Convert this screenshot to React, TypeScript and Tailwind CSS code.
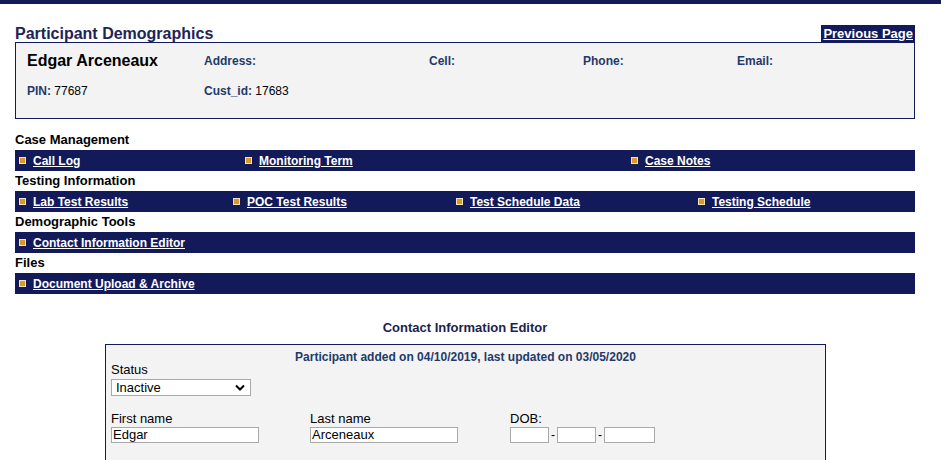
import React from "react";

const NAVY = "bg-[#121a5a]";

type Link = { label: string; width?: string };

function Bullet() {
  return <span className="mr-[7px] inline-block h-[7px] w-[7px] border border-[#f3e3b8] bg-[#d99a2b]" />;
}

function Bar({ links }: { links: Link[] }) {
  return (
    <div className={`flex h-[21px] items-center ${NAVY} pl-[4px]`}>
      {links.map((l) => (
        <div key={l.label} className={`flex items-center ${l.width ?? ""}`}>
          <Bullet />
          <a href="#" className="text-[12px] font-bold text-white underline">
            {l.label}
          </a>
        </div>
      ))}
    </div>
  );
}

function Section({ title, links }: { title: string; links: Link[] }) {
  return (
    <div>
      <div className="flex h-[20px] items-center text-[13px] font-bold text-black">{title}</div>
      <Bar links={links} />
    </div>
  );
}

export default function App() {
  return (
    <div className="min-h-[460px] overflow-hidden bg-white font-['Liberation_Sans',Arial,sans-serif]">
      <div className={`h-[4px] ${NAVY}`} />
      <div className="px-[15px] pr-[26px]">
        <div className="mt-[21px] flex items-end justify-between">
          <h1 className="text-[16px] font-bold leading-[17px] text-[#1d2456]">Participant Demographics</h1>
          <a href="#" className={`${NAVY} px-[2px] text-[13px] font-bold leading-[17px] text-white underline`}>
            Previous Page
          </a>
        </div>
        <div className="h-[77px] border border-[#121a5a] bg-[#f3f3f4] pl-[11px] pt-[6px]">
          <div className="flex items-center">
            <div className="w-[177px] text-[16px] font-bold text-black">Edgar Arceneaux</div>
            <div className="w-[225px] text-[12px] font-bold text-[#1f3a6a]">Address:</div>
            <div className="w-[154px] text-[12px] font-bold text-[#1f3a6a]">Cell:</div>
            <div className="w-[154px] text-[12px] font-bold text-[#1f3a6a]">Phone:</div>
            <div className="text-[12px] font-bold text-[#1f3a6a]">Email:</div>
          </div>
          <div className="mt-[9px] flex items-center text-[12px]">
            <div className="w-[177px]">
              <span className="font-bold text-[#1f3a6a]">PIN:</span> <span className="text-black">77687</span>
            </div>
            <div>
              <span className="font-bold text-[#1f3a6a]">Cust_id:</span> <span className="text-black">17683</span>
            </div>
          </div>
        </div>

        <div className="mt-[11px]">
          <Section
            title="Case Management"
            links={[
              { label: "Call Log", width: "w-[226px]" },
              { label: "Monitoring Term", width: "w-[386px]" },
              { label: "Case Notes" },
            ]}
          />
          <Section
            title="Testing Information"
            links={[
              { label: "Lab Test Results", width: "w-[214px]" },
              { label: "POC Test Results", width: "w-[223px]" },
              { label: "Test Schedule Data", width: "w-[242px]" },
              { label: "Testing Schedule" },
            ]}
          />
          <Section title="Demographic Tools" links={[{ label: "Contact Information Editor" }]} />
          <Section title="Files" links={[{ label: "Document Upload & Archive" }]} />
        </div>

        <div className="mt-[24px] text-center text-[13px] font-bold text-[#1a1f4f]">Contact Information Editor</div>
        <div className="ml-[90px] mt-[6px] h-[140px] w-[721px] border border-[#121a5a] bg-[#f3f3f4] px-[5px] pt-[6px]">
          <div className="text-center text-[12px] font-bold leading-[12px] text-[#1f3a6a]">
            Participant added on 04/10/2019, last updated on 03/05/2020
          </div>
          <div className="text-[13px] leading-[14px] text-black">Status</div>
          <div className="relative mt-[2px] h-[17px] w-[140px] border border-[#a9a9a9] bg-white">
            <span className="absolute left-[4px] top-[0px] text-[13px] leading-[15px] text-black">Inactive</span>
            <svg className="absolute right-[5px] top-[4px]" width="10" height="7" viewBox="0 0 10 7">
              <path d="M1 1.5 L5 5.5 L9 1.5" stroke="#000" strokeWidth="2" fill="none" />
            </svg>
          </div>
          <div className="mt-[16px] flex text-[13px] text-black">
            <div className="w-[199px]">
              <div className="leading-[14px]">First name</div>
              <div className="mt-[1px] h-[16px] w-[148px] border border-[#a9a9a9] bg-white pl-[1px] leading-[14px]">Edgar</div>
            </div>
            <div className="w-[200px]">
              <div className="leading-[14px]">Last name</div>
              <div className="mt-[1px] h-[16px] w-[148px] border border-[#a9a9a9] bg-white pl-[1px] leading-[14px]">Arceneaux</div>
            </div>
            <div>
              <div className="leading-[14px]">DOB:</div>
              <div className="mt-[1px] flex items-center">
                <div className="h-[16px] w-[39px] border border-[#a9a9a9] bg-white" />
                <span className="mx-[2px] w-[4px] text-[12px] leading-[14px]">-</span>
                <div className="h-[16px] w-[39px] border border-[#a9a9a9] bg-white" />
                <span className="mx-[2px] w-[4px] text-[12px] leading-[14px]">-</span>
                <div className="h-[16px] w-[51px] border border-[#a9a9a9] bg-white" />
              </div>
            </div>
          </div>
        </div>
      </div>
    </div>
  );
}
